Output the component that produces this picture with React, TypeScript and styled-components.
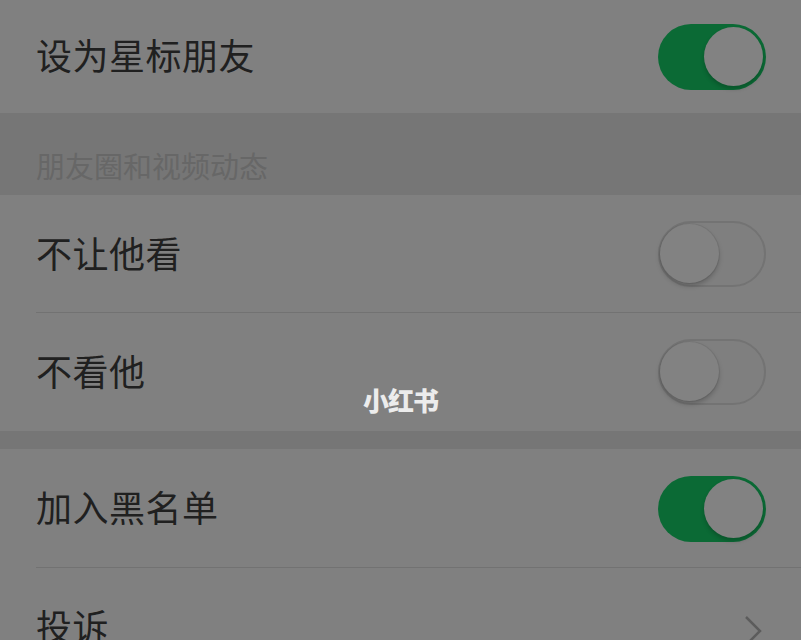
import React from "react";
import styled, { createGlobalStyle } from "styled-components";

const GlobalStyle = createGlobalStyle`
  html, body {
    margin: 0;
    padding: 0;
    background: #808080;
    overflow: hidden;
  }
  body {
    font-family: "Noto Sans CJK SC", "Noto Sans", sans-serif;
  }
`;

const Screen = styled.div`
  position: relative;
  width: 801px;
  height: 640px;
  overflow: hidden;
  background: #808080;
  display: flex;
  flex-direction: column;
`;

const Row = styled.div<{ $h: number; $line?: boolean }>`
  flex: none;
  height: ${(p) => p.$h}px;
  display: flex;
  align-items: center;
  justify-content: space-between;
  padding: 0 35px 0 36px;
  position: relative;
  background: #808080;
  ${(p) =>
    p.$line &&
    `
    &::after {
      content: "";
      position: absolute;
      left: 36px;
      right: 0;
      bottom: 0;
      height: 1px;
      background: #727272;
    }
  `}
`;

const Label = styled.span`
  font-size: 36px;
  line-height: 1;
  color: #202020;
  letter-spacing: 0.5px;
  margin-bottom: 5px;
`;

const SectionHeader = styled.div`
  flex: none;
  height: 82px;
  box-sizing: border-box;
  padding: 37px 0 0 36px;
  background: #767676;
  font-size: 29px;
  line-height: 30px;
  color: #676767;
`;

const Gap = styled.div`
  flex: none;
  height: 18px;
  background: #767676;
`;

const Track = styled.div<{ $on: boolean }>`
  width: 108px;
  height: 66px;
  box-sizing: border-box;
  border-radius: 33px;
  position: relative;
  background: ${(p) => (p.$on ? "#0b6a35" : "#7f7f7f")};
  border: ${(p) => (p.$on ? "none" : "2px solid #737373")};
  flex: none;
`;

const Knob = styled.div<{ $on: boolean }>`
  position: absolute;
  width: ${(p) => (p.$on ? 59 : 59)}px;
  height: ${(p) => (p.$on ? 59 : 59)}px;
  border-radius: 50%;
  background: #828282;
  top: ${(p) => (p.$on ? 3.5 : 1)}px;
  ${(p) => (p.$on ? "right: 3.5px;" : "left: 0px;")}
  box-shadow: ${(p) =>
    p.$on
      ? "0 3px 4px rgba(0,0,0,0.2)"
      : "0 3px 5px rgba(0,0,0,0.22), 0 0 0 1px rgba(0,0,0,0.06)"};
`;

const Watermark = styled.div`
  position: absolute;
  left: 0;
  right: 0;
  top: 383px;
  text-align: center;
  font-family: "Noto Sans CJK SC", sans-serif;
  font-weight: 900;
  font-size: 26px;
  line-height: 34px;
  color: #ececec;
  letter-spacing: -1px;
`;

const Switch = ({ on }: { on: boolean }) => (
  <Track $on={on}>
    <Knob $on={on} />
  </Track>
);

const Chevron = () => (
  <svg width="24" height="40" viewBox="0 0 24 40" style={{ marginTop: 14 }}>
    <path d="M4 3 L18 17 L4 31" fill="none" stroke="#5c5c5c" strokeWidth="2.5" />
  </svg>
);

const App: React.FC = () => {
  return (
    <>
      <GlobalStyle />
      <Screen>
        <Row $h={113}>
          <Label>设为星标朋友</Label>
          <Switch on={true} />
        </Row>
        <SectionHeader>朋友圈和视频动态</SectionHeader>
        <Row $h={118} $line>
          <Label>不让他看</Label>
          <Switch on={false} />
        </Row>
        <Row $h={118}>
          <Label>不看他</Label>
          <Switch on={false} />
        </Row>
        <Gap />
        <Row $h={119} $line>
          <Label>加入黑名单</Label>
          <Switch on={true} />
        </Row>
        <Row $h={118}>
          <Label>投诉</Label>
          <Chevron />
        </Row>
        <Watermark>小红书</Watermark>
      </Screen>
    </>
  );
};

export default App;
